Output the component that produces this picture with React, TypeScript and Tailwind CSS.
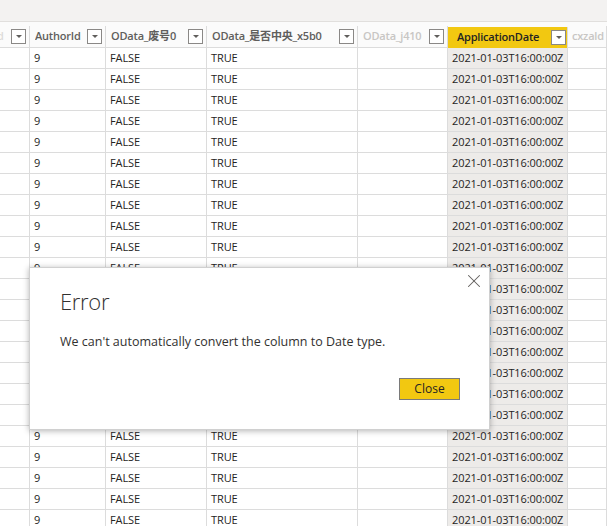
import { X } from 'lucide-react'

interface Column {
  title: string
  width: string
  muted?: boolean
  active?: boolean
  value: string
}

const columns: Column[] = [
  { title: 'd', width: 'w-[30px]', muted: true, value: '' },
  { title: 'AuthorId', width: 'w-[76px]', value: '9' },
  { title: 'OData_废号0', width: 'w-[101px]', value: 'FALSE' },
  { title: 'OData_是否中央_x5b0', width: 'w-[151px]', value: 'TRUE' },
  { title: 'OData_j410', width: 'w-[90px]', muted: true, value: '' },
  { title: 'ApplicationDate', width: 'w-[120px]', active: true, value: '2021-01-03T16:00:00Z' },
  { title: 'cxzald', width: 'flex-1', muted: true, value: '' },
]

const rows = Array.from({ length: 23 }, (_, i) => i)

function FilterButton() {
  return (
    <div className="flex h-[15px] w-[15px] shrink-0 items-center justify-center border border-[#8a8886] bg-white">
      <div className="h-0 w-0 border-x-[3px] border-t-[3px] border-x-transparent border-t-[#605e5c]" />
    </div>
  )
}

function HeaderCell({ col }: { col: Column }) {
  const isLast = col.width === 'flex-1'
  const isStub = col.title === 'd'
  return (
    <div
      className={`${col.width} flex h-full shrink-0 items-center overflow-hidden border-r border-[#dcdcdc] ${
        col.active
          ? 'mt-[1px] bg-[#f2c811] pl-[9px] pr-[1px]'
          : isStub
            ? 'pr-[3px]'
            : isLast
              ? 'pl-[4px]'
              : 'pl-[5px] pr-[3px]'
      }`}
    >
      <span
        className={`min-w-0 flex-1 overflow-hidden whitespace-nowrap text-[11px] font-semibold tracking-[-0.2px] ${
          col.active ? 'text-[#252423]' : col.muted ? 'text-[#c8c6c4]' : 'text-[#605e5c]'
        } ${isStub ? '-ml-[3px] text-[#dddbd9]' : ''}`}
      >
        {col.title}
      </span>
      {!isLast && <FilterButton />}
    </div>
  )
}

export default function App() {
  return (
    <div
      className="relative h-[526px] w-[607px] overflow-hidden bg-white"
      style={{ fontFamily: '"Open Sans", "Noto Sans CJK SC", sans-serif' }}
    >
      <div className="h-[22px] border-b border-[#e1dfdd] bg-[#f3f2f1]" />
      <div className="h-[4px] bg-[#fbfbfb]" />

      <div className="flex h-[22px] border-b border-[#dcdcdc] bg-[#fbfbfb]">
        {columns.map((col) => (
          <HeaderCell key={col.title} col={col} />
        ))}
      </div>

      {rows.map((r) => (
        <div key={r} className="flex h-[21px] border-b border-[#dcdcdc]">
          {columns.map((col) => (
            <div
              key={col.title}
              className={`${col.width} flex shrink-0 items-center overflow-hidden whitespace-nowrap border-r border-[#dcdcdc] pl-[4px] text-[11px] tracking-[-0.1px] text-[#252423] ${
                col.active ? 'bg-[#edebe9]' : ''
              }`}
            >
              {col.value}
            </div>
          ))}
        </div>
      ))}

      <div className="absolute left-[29px] top-[267px] flex h-[163px] w-[461px] flex-col border border-[#d0d0d0] bg-white shadow-[0_1px_6px_rgba(0,0,0,0.3)]">
        <div className="flex justify-end pr-[4px] pt-[2px]">
          <X className="h-[22px] w-[22px] text-[#605e5c]" strokeWidth={1.1} />
        </div>
        <div className="-mt-[6px] pl-[30px] text-[22px] font-light leading-[30px] tracking-[-0.3px] text-[#323130]">
          Error
        </div>
        <div className="mt-[17px] pl-[30px] text-[12.5px] text-[#323130]">
          We can't automatically convert the column to Date type.
        </div>
        <div className="mt-auto flex justify-end pb-[29px] pr-[29px]">
          <button className="h-[22px] w-[61px] border border-[#7a7a7a] bg-[#f2c811] text-[12px] text-[#252423]">
            Close
          </button>
        </div>
      </div>
    </div>
  )
}
